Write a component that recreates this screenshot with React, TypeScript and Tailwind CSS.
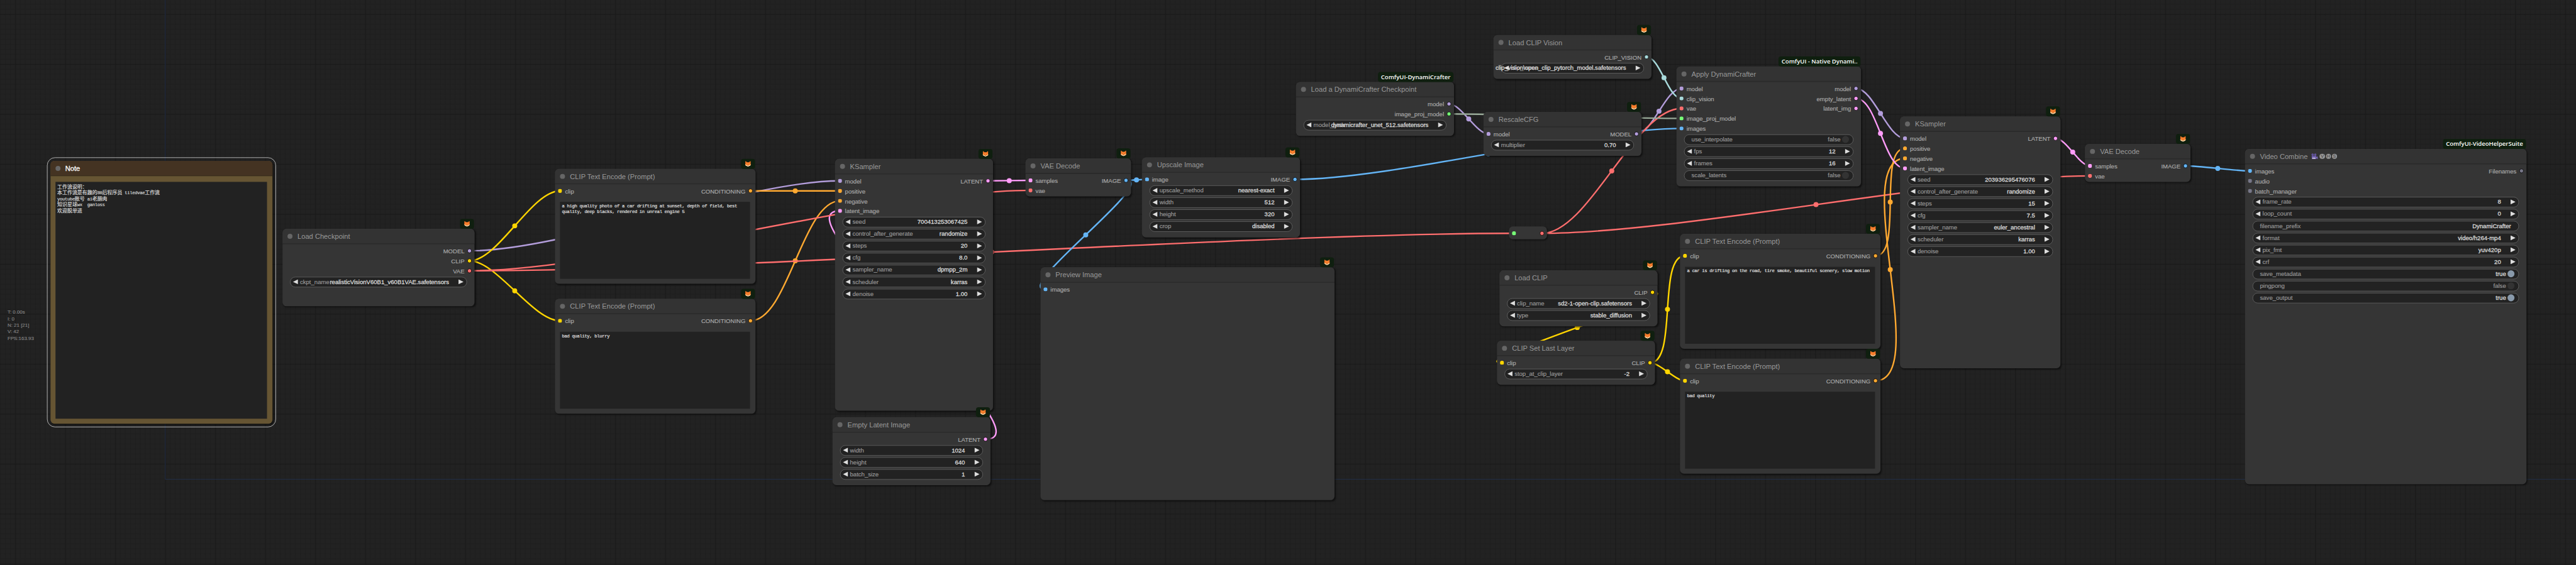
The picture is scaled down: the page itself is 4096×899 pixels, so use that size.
import { Fragment } from "react";
import type { ReactNode } from "react";

/* ---------- palette ---------- */

const MODEL = "#B39DDB";
const CLIP = "#FFD500";
const VAE = "#FF6E6E";
const COND = "#FFA931";
const LATENT = "#FF9CF9";
const IMAGE = "#64B5F6";
const VISION = "#A8DADC";
const ANY_LINKED = "#77FF77";
const UNLINKED = "#777788";
const PLAIN_LINK = "#99AA99";

/* ---------- types ---------- */

type Slot = { name: string; color: string };
type WidgetDef = { kind: "combo" | "text" | "toggle"; name: string; value: string };
type NodeDef = {
  id: string;
  title: ReactNode;
  x: number;
  y: number;
  w: number;
  h: number;
  inputs?: Slot[];
  outputs?: Slot[];
  widgets?: WidgetDef[];
  text?: string;
  badge?: string;
};
type LinkDef = { from: [number, number]; to: [number, number]; color: string };

const s = (name: string, color: string): Slot => ({ name, color });
const c = (name: string, value: string): WidgetDef => ({ kind: "combo", name, value });

/* ---------- icons ---------- */

function Fox() {
  return (
    <svg viewBox="0 0 24 24" className="size-3">
      <path d="M2 .8 8.600 5.400h6.800L22 .8c.9 3.600.9 7 .4 10.400L23.400 15 19 20H5L.6 15l1-3.800C1.100 7.800 1.100 4.400 2 .8Z" fill="#FF822D" />
      <path d="M3.600 3.600 7 6.200l-2.900 2.600ZM20.400 3.600 17 6.200l2.900 2.600Z" fill="#D4541C" />
      <path d="M.6 15.500c3-.5 5.800.2 7.600 2.200l3.800.8 3.800-.8c1.800-2 4.600-2.700 7.600-2.200-1.500 2.800-4 4.600-6.600 5.300L12 23l-4.800-2.200C4.600 20.100 2.100 18.300.6 15.500Z" fill="#FFDFB0" />
      <circle cx="8" cy="13" r="1.200" fill="#6A3A1C" />
      <circle cx="16" cy="13" r="1.200" fill="#6A3A1C" />
      <path d="M10.200 17.600h3.600L12 19.800Z" fill="#33221A" />
    </svg>
  );
}

function MovieCamera() {
  return (
    <svg viewBox="0 0 28 24" preserveAspectRatio="none" className="h-3 w-3.5">
      <circle cx="6.500" cy="5" r="4.600" fill="#6B5BA8" />
      <circle cx="17" cy="5" r="4.600" fill="#6B5BA8" />
      <circle cx="6.500" cy="5" r="1.500" fill="#3F3470" />
      <circle cx="17" cy="5" r="1.500" fill="#3F3470" />
      <rect x="3" y="9" width="18" height="14" rx="1.500" fill="#6B5BA8" />
      <path d="m21 15 6-3.500v11L21 20Z" fill="#7C6CBA" />
      <rect x="5.500" y="17" width="12" height="4.500" fill="#E8E0F0" />
      <path d="M9.500 17v4.500M13.500 17v4.500" stroke="#6B5BA8" strokeWidth="1" />
    </svg>
  );
}

function Arrow({ dir }: { dir: "left" | "right" }) {
  return (
    <svg viewBox="0 0 10 10" className="size-2.5 shrink-0">
      <path d={dir === "left" ? "M10 0 0 5l10 5Z" : "M0 0l10 5-10 5Z"} fill="#DDDDDD" />
    </svg>
  );
}

/* ---------- node parts ---------- */

function Widget({ kind, name, value }: WidgetDef) {
  if (kind === "combo") {
    return (
      <div className="flex h-[21px] items-center rounded-full border border-[#666] bg-[#222] px-[5.5px] text-xs whitespace-nowrap">
        <Arrow dir="left" />
        <span className="ml-1 w-0 text-[#999] [-webkit-text-stroke:0.2px]">{name}</span>
        <div className="mr-[19px] flex w-0 grow justify-end text-[#ddd] [-webkit-text-stroke:0.35px]">
          <span>{value}</span>
        </div>
        <Arrow dir="right" />
      </div>
    );
  }
  if (kind === "text") {
    return (
      <div className="flex h-[21px] items-center justify-between rounded-full border border-[#666] bg-[#222] px-[14.5px] text-xs">
        <span className="text-[#999] [-webkit-text-stroke:0.2px]">{name}</span>
        <span className="text-[#ddd] [-webkit-text-stroke:0.35px]">{value}</span>
      </div>
    );
  }
  const on = value === "true";
  return (
    <div className="flex h-[21px] items-center rounded-full border border-[#666] bg-[#222] pr-[7.3px] pl-[14.5px] text-xs">
      <span className="grow text-[#999] [-webkit-text-stroke:0.2px]">{name}</span>
      <span className={on ? "text-[#ddd] [-webkit-text-stroke:0.35px]" : "text-[#999] [-webkit-text-stroke:0.2px]"}>{value}</span>
      <span className={on ? "ml-[2.8px] size-[14.4px] rounded-full bg-[#8899aa]" : "ml-[2.8px] size-[14.4px] rounded-full bg-[#333]"} />
    </div>
  );
}

function OutDot({ color }: { color: string }) {
  return (
    <svg viewBox="0 0 10 10" className="size-2.5 shrink-0">
      <circle cx="5" cy="5" r="4" fill={color} stroke="#000" strokeWidth="1" />
    </svg>
  );
}

function InDot({ color }: { color: string }) {
  return (
    <svg viewBox="0 0 8 8" className="size-2 shrink-0">
      <circle cx="4" cy="4" r="4" fill={color} />
    </svg>
  );
}

function Badge({ text }: { text?: string }) {
  return (
    <div className="absolute -top-5 right-px flex h-5 min-w-7 items-center justify-center rounded-[5px] bg-[#0F1F0F] px-1.5 font-['Open_Sans',sans-serif] text-xs font-semibold whitespace-nowrap text-white">
      {text ?? <Fox />}
    </div>
  );
}

function GraphNode({ node }: { node: NodeDef }) {
  const inputs = node.inputs ?? [];
  const outputs = node.outputs ?? [];
  const rows = Array.from({ length: Math.max(inputs.length, outputs.length) });
  return (
    <div
      className="absolute flex flex-col rounded-lg bg-[#353535] shadow-[2px_2px_3px_rgba(0,0,0,0.5)]"
      style={{ left: node.x, top: node.y - 30, width: node.w, height: node.h + 30 }}
    >
      <Badge text={node.badge} />
      <div className="flex h-[30px] shrink-0 items-center rounded-t-lg bg-[#333] pl-2.5 text-sm whitespace-nowrap text-[#999] shadow-[inset_0_-1px_0_rgba(0,0,0,0.2),0_1px_0_rgba(0,0,0,0.2)]">
        <span className="mr-2.5 size-2.5 rounded-full bg-[#666]" />
        {node.title}
      </div>
      <div className="flex shrink-0 flex-col pt-1 pb-[1.5px] text-xs text-[#aaa] [-webkit-text-stroke:0.2px]">
        {rows.map((_, i) => (
          <div key={i} className="flex h-5 items-center justify-between pr-[5px] pl-1.5">
            <div className="flex items-center gap-1.5">
              {inputs[i] && (
                <>
                  <InDot color={inputs[i].color} />
                  <span className="pt-[1.7px]">{inputs[i].name}</span>
                </>
              )}
            </div>
            <div className="flex items-center gap-[5px]">
              {outputs[i] && (
                <>
                  <span className="pt-[1.7px]">{outputs[i].name}</span>
                  <OutDot color={outputs[i].color} />
                </>
              )}
            </div>
          </div>
        ))}
      </div>
      {node.widgets && (
        <div className="flex flex-col gap-[3px] pr-[15.5px] pl-[14.5px]">
          {node.widgets.map((w) => (
            <Widget key={w.name} {...w} />
          ))}
        </div>
      )}
      {node.text !== undefined && (
        <div className="mt-[10.5px] mr-[11px] mb-2.5 ml-2.5 grow bg-[#222] px-1 pt-[3px] font-['Liberation_Mono',monospace] text-[9px] leading-3 tracking-[-0.4px] text-[#ddd] [-webkit-text-stroke:0.3px]">
          {node.text}
        </div>
      )}
    </div>
  );
}

function NoteLine({ line }: { line: string }) {
  const parts = line.split(/([\x20-\x7e]+)/).filter(Boolean);
  return (
    <div className="h-3 whitespace-pre">
      {parts.map((p, i) =>
        /^[\x20-\x7e]/.test(p) ? (
          <span key={i} className="font-['Liberation_Mono',monospace] text-[9px] tracking-[-0.4px]">{p}</span>
        ) : (
          <Fragment key={i}>{p}</Fragment>
        )
      )}
    </div>
  );
}

function NoteNode() {
  const lines = [
    "工作流说明：",
    "本工作流是有趣的80后程序员 tiledvae工作流",
    "youtube账号 ai老腊肉",
    "知识星球wx  ganloss",
    "欢迎脱单进",
  ];
  return (
    <div className="absolute top-[314.5px] left-[93.5px] h-[540px] w-[458px] rounded-2xl border border-white/80 p-1.5">
      <div className="flex h-full flex-col overflow-hidden rounded-lg bg-[#665533] shadow-[2px_2px_3px_rgba(0,0,0,0.5)]">
        <div className="flex h-[30px] shrink-0 items-center bg-[#443322] pl-2.5 text-sm text-white shadow-[inset_0_-1px_0_rgba(0,0,0,0.2),0_1px_0_rgba(0,0,0,0.2)] [-webkit-text-stroke:0.35px]">
          <span className="mr-2.5 size-2.5 rounded-full bg-[#666]" />
          Note
        </div>
        <div className="mt-3 mr-[11px] mb-2.5 ml-2.5 grow bg-[#222] px-1 pt-[3px] font-['Noto_Sans_CJK_SC',sans-serif] text-[10px] leading-3 text-[#ddd] [-webkit-text-stroke:0.2px]">
          {lines.map((l) => (
            <NoteLine key={l} line={l} />
          ))}
        </div>
      </div>
    </div>
  );
}

/* ---------- graph data ---------- */

const vhsTitle = (
  <span className="flex items-center">
    <span className="mr-[7px]">Video Combine</span>
    <MovieCamera />
    <span className="ml-[3px] flex gap-[1.5px]">
      {["V", "H", "S"].map((l) => (
        <span key={l} className="flex size-[10.600px] items-center justify-center rounded-full bg-[#999] text-[9px] leading-none text-[#333]">{l}</span>
      ))}
    </span>
  </span>
);

const nodes: NodeDef[] = [
  {
    id: "ckpt", title: "Load Checkpoint", x: 565, y: 488, w: 384, h: 125,
    outputs: [s("MODEL", MODEL), s("CLIP", CLIP), s("VAE", VAE)],
    widgets: [c("ckpt_name", "realisticVisionV60B1_v60B1VAE.safetensors")],
  },
  {
    id: "pos1", title: "CLIP Text Encode (Prompt)", x: 1110, y: 368, w: 401, h: 200,
    inputs: [s("clip", CLIP)], outputs: [s("CONDITIONING", COND)],
    text: "a high quality photo of a car drifting at sunset, depth of field, best quality, deep blacks, rendered in unreal engine 5",
  },
  {
    id: "neg1", title: "CLIP Text Encode (Prompt)", x: 1110, y: 628, w: 401, h: 200,
    inputs: [s("clip", CLIP)], outputs: [s("CONDITIONING", COND)],
    text: "bad quality, blurry",
  },
  {
    id: "ks1", title: "KSampler", x: 1670, y: 348, w: 316, h: 474,
    inputs: [s("model", MODEL), s("positive", COND), s("negative", COND), s("latent_image", LATENT)],
    outputs: [s("LATENT", LATENT)],
    widgets: [
      c("seed", "700413253067425"), c("control_after_generate", "randomize"), c("steps", "20"), c("cfg", "8.0"),
      c("sampler_name", "dpmpp_2m"), c("scheduler", "karras"), c("denoise", "1.00"),
    ],
  },
  {
    id: "latent", title: "Empty Latent Image", x: 1665, y: 865, w: 316, h: 106,
    outputs: [s("LATENT", LATENT)],
    widgets: [c("width", "1024"), c("height", "640"), c("batch_size", "1")],
  },
  {
    id: "vae1", title: "VAE Decode", x: 2051, y: 347, w: 211, h: 46,
    inputs: [s("samples", LATENT), s("vae", VAE)], outputs: [s("IMAGE", IMAGE)],
  },
  {
    id: "upscale", title: "Upscale Image", x: 2284, y: 345, w: 316, h: 130,
    inputs: [s("image", IMAGE)], outputs: [s("IMAGE", IMAGE)],
    widgets: [c("upscale_method", "nearest-exact"), c("width", "512"), c("height", "320"), c("crop", "disabled")],
  },
  { id: "preview", title: "Preview Image", x: 2081, y: 565, w: 588, h: 436, inputs: [s("images", IMAGE)] },
  {
    id: "dcckpt", title: "Load a DynamiCrafter Checkpoint", x: 2592, y: 194, w: 316, h: 78, badge: "ComfyUI-DynamiCrafter",
    outputs: [s("model", MODEL), s("image_proj_model", ANY_LINKED)],
    widgets: [c("model_path", "dynamicrafter_unet_512.safetensors")],
  },
  {
    id: "vision", title: "Load CLIP Vision", x: 2987, y: 100, w: 316, h: 58,
    outputs: [s("CLIP_VISION", VISION)],
    widgets: [c("clip_name", "clip_vision\\open_clip_pytorch_model.safetensors")],
  },
  {
    id: "rescale", title: "RescaleCFG", x: 2967, y: 254, w: 316, h: 58,
    inputs: [s("model", MODEL)], outputs: [s("MODEL", MODEL)],
    widgets: [c("multiplier", "0.70")],
  },
  {
    id: "apply", title: "Apply DynamiCrafter", x: 3353, y: 163, w: 369, h: 210, badge: "ComfyUI - Native Dynami..",
    inputs: [s("model", MODEL), s("clip_vision", VISION), s("vae", VAE), s("image_proj_model", ANY_LINKED), s("images", IMAGE)],
    outputs: [s("model", MODEL), s("empty_latent", LATENT), s("latent_img", LATENT)],
    widgets: [
      { kind: "toggle", name: "use_interpolate", value: "false" }, c("fps", "12"), c("frames", "16"),
      { kind: "toggle", name: "scale_latents", value: "false" },
    ],
  },
  {
    id: "loadclip", title: "Load CLIP", x: 2999, y: 571, w: 316, h: 82,
    outputs: [s("CLIP", CLIP)],
    widgets: [c("clip_name", "sd2-1-open-clip.safetensors"), c("type", "stable_diffusion")],
  },
  {
    id: "lastlayer", title: "CLIP Set Last Layer", x: 2994, y: 712, w: 316, h: 58,
    inputs: [s("clip", CLIP)], outputs: [s("CLIP", CLIP)],
    widgets: [c("stop_at_clip_layer", "-2")],
  },
  {
    id: "pos2", title: "CLIP Text Encode (Prompt)", x: 3360, y: 498, w: 401, h: 200,
    inputs: [s("clip", CLIP)], outputs: [s("CONDITIONING", COND)],
    text: "a car is drifting on the road, tire smoke, beautiful scenery, slow motion",
  },
  {
    id: "neg2", title: "CLIP Text Encode (Prompt)", x: 3360, y: 748, w: 401, h: 200,
    inputs: [s("clip", CLIP)], outputs: [s("CONDITIONING", COND)],
    text: "bad quality",
  },
  {
    id: "ks2", title: "KSampler", x: 3800, y: 263, w: 321, h: 474,
    inputs: [s("model", MODEL), s("positive", COND), s("negative", COND), s("latent_image", LATENT)],
    outputs: [s("LATENT", LATENT)],
    widgets: [
      c("seed", "203936295476076"), c("control_after_generate", "randomize"), c("steps", "15"), c("cfg", "7.5"),
      c("sampler_name", "euler_ancestral"), c("scheduler", "karras"), c("denoise", "1.00"),
    ],
  },
  {
    id: "vae2", title: "VAE Decode", x: 4170, y: 318, w: 211, h: 46,
    inputs: [s("samples", LATENT), s("vae", VAE)], outputs: [s("IMAGE", IMAGE)],
  },
  {
    id: "vhs", title: vhsTitle, x: 4490, y: 328, w: 563, h: 641, badge: "ComfyUI-VideoHelperSuite",
    inputs: [s("images", IMAGE), s("audio", UNLINKED), s("batch_manager", UNLINKED)],
    outputs: [s("Filenames", UNLINKED)],
    widgets: [
      c("frame_rate", "8"), c("loop_count", "0"),
      { kind: "text", name: "filename_prefix", value: "DynamiCrafter" },
      c("format", "video/h264-mp4"), c("pix_fmt", "yuv420p"), c("crf", "20"),
      { kind: "toggle", name: "save_metadata", value: "true" },
      { kind: "toggle", name: "pingpong", value: "false" },
      { kind: "toggle", name: "save_output", value: "true" },
    ],
  },
];

const links: LinkDef[] = [
  { from: [939, 502], to: [1680, 362], color: MODEL },
  { from: [1501, 382], to: [1680, 382], color: COND },
  { from: [1501, 642], to: [1680, 402], color: COND },
  { from: [1971, 879], to: [1680, 422], color: LATENT },
  { from: [939, 522], to: [1120, 382], color: CLIP },
  { from: [939, 522], to: [1120, 642], color: CLIP },
  { from: [1976, 362], to: [2061, 361], color: LATENT },
  { from: [939, 542], to: [2061, 381], color: VAE },
  { from: [939, 542], to: [3028, 467], color: VAE },
  { from: [2252, 361], to: [2294, 359], color: IMAGE },
  { from: [2252, 361], to: [2091, 579], color: IMAGE },
  { from: [2590, 359], to: [3363, 257], color: IMAGE },
  { from: [2898, 208], to: [2977, 268], color: MODEL },
  { from: [3273, 268], to: [3363, 177], color: MODEL },
  { from: [3293, 114], to: [3363, 197], color: VISION },
  { from: [3084, 467], to: [3363, 217], color: VAE },
  { from: [2898, 228], to: [3363, 237], color: PLAIN_LINK },
  { from: [3084, 467], to: [4180, 352], color: VAE },
  { from: [3305, 585], to: [3004, 726], color: CLIP },
  { from: [3300, 726], to: [3370, 512], color: CLIP },
  { from: [3300, 726], to: [3370, 762], color: CLIP },
  { from: [3712, 177], to: [3810, 277], color: MODEL },
  { from: [3751, 512], to: [3810, 297], color: COND },
  { from: [3751, 762], to: [3810, 317], color: COND },
  { from: [3712, 197], to: [3810, 337], color: LATENT },
  { from: [4111, 277], to: [4180, 332], color: LATENT },
  { from: [4371, 332], to: [4500, 342], color: IMAGE },
];

/* ---------- canvas layers ---------- */

function Link({ from, to, color }: LinkDef) {
  const [ax, ay] = from;
  const [bx, by] = to;
  const d = Math.hypot(bx - ax, by - ay) * 0.25;
  return (
    <g>
      <path d={`M${ax} ${ay}C${ax + d} ${ay} ${bx - d} ${by} ${bx} ${by}`} fill="none" stroke={color} strokeWidth="3" />
      <circle cx={(ax + bx) / 2} cy={(ay + by) / 2} r="5" fill={color} />
    </g>
  );
}

function Backdrop() {
  const steps = [10, 20, 30, 40, 50, 60, 70, 80, 90];
  return (
    <svg viewBox="0 0 5152 1131" className="absolute top-0 left-0 h-[1131px] w-[5152px]">
      <defs>
        <pattern id="grid" x="330" y="-172" width="100" height="100" patternUnits="userSpaceOnUse">
          {steps.map((n) => (
            <Fragment key={n}>
              <rect x={n + 0.3} y="0" width="1" height="100" fill="#1c1c1c" />
              <rect x="0" y={n + 0.3} width="100" height="1" fill="#1c1c1c" />
            </Fragment>
          ))}
          <rect x="0.200" y="0" width="1.600" height="100" fill="#191919" />
          <rect x="0" y="0" width="100" height="1.600" fill="#191919" />
        </pattern>
      </defs>
      <rect width="5152" height="1131" fill="#222222" />
      <rect width="5152" height="1131" fill="url(#grid)" />
      <path d="M330.500 0V959H5152" fill="none" stroke="#223355" strokeWidth="1.300" strokeOpacity="0.700" />
      {links.map((l, i) => (
        <Link key={i} {...l} />
      ))}
    </svg>
  );
}

function Reroute() {
  return (
    <div className="absolute top-[453px] left-[3018px] flex h-[26px] w-[76px] items-center justify-between rounded-lg bg-[#353535] pt-0.5 pr-[5px] pl-1.5 shadow-[2px_2px_3px_rgba(0,0,0,0.5)]">
      <InDot color={ANY_LINKED} />
      <OutDot color={VAE} />
    </div>
  );
}

function Stats() {
  return (
    <div className="absolute top-[618px] left-[15px] flex flex-col text-[10px] leading-[13px] text-[#888] [-webkit-text-stroke:0.15px]">
      <span>T: 0.00s</span>
      <span>I: 0</span>
      <span>N: 21 [21]</span>
      <span>V: 42</span>
      <span>FPS:163.93</span>
    </div>
  );
}

export default function App() {
  return (
    <main className="h-[899px] w-[4096px] overflow-hidden bg-[#212121]">
      <div className="relative h-[1131px] w-[5152px] origin-top-left scale-[0.79503] font-['Liberation_Sans',Arial,sans-serif]">
        <Backdrop />
        <NoteNode />
        {nodes.map((n) => (
          <GraphNode key={n.id} node={n} />
        ))}
        <Reroute />
        <Stats />
      </div>
    </main>
  );
}
